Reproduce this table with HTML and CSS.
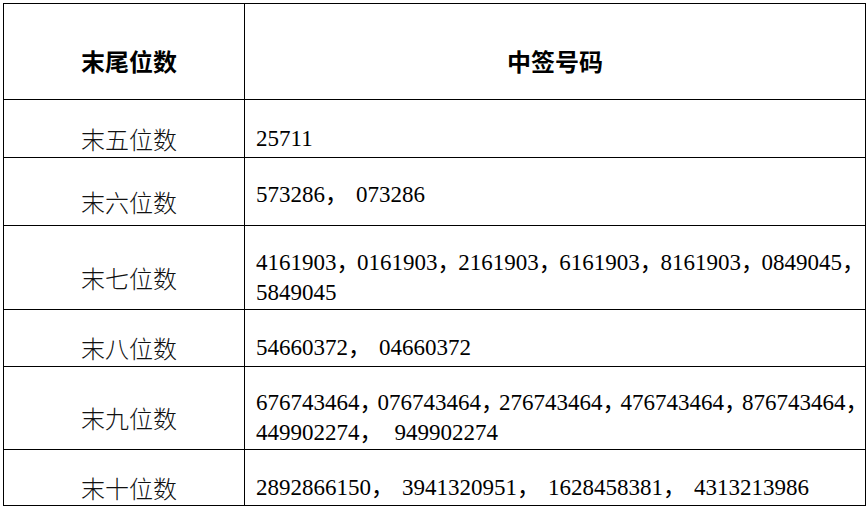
FILE: index.html
```html
<!DOCTYPE html>
<html lang="zh-CN">
<head>
<meta charset="utf-8">
<title>中签号码</title>
<link rel="stylesheet" href="styles.css">
</head>
<body>
<table class="lottery">
  <thead>
    <tr class="row-head">
      <th class="col-tail">末尾位数</th>
      <th class="col-nums">中签号码</th>
    </tr>
  </thead>
  <tbody>
    <tr class="row-5">
      <td class="label">末五位数</td>
      <td class="nums">25711</td>
    </tr>
    <tr class="row-6">
      <td class="label">末六位数</td>
      <td class="nums nums-top">573286<span class="sep">，</span>073286</td>
    </tr>
    <tr class="row-7">
      <td class="label">末七位数</td>
      <td class="nums">4161903<span class="sep sep-j7">，</span>0161903<span class="sep sep-j7">，</span>2161903<span class="sep sep-j7">，</span>6161903<span class="sep sep-j7">，</span>8161903<span class="sep sep-j7">，</span>0849045<span class="sep sep-end">，</span><br>5849045</td>
    </tr>
    <tr class="row-8">
      <td class="label">末八位数</td>
      <td class="nums">54660372<span class="sep">，</span>04660372</td>
    </tr>
    <tr class="row-9">
      <td class="label">末九位数</td>
      <td class="nums">676743464<span class="sep sep-j9">，</span>076743464<span class="sep sep-j9">，</span>276743464<span class="sep sep-j9">，</span>476743464<span class="sep sep-j9">，</span>876743464<span class="sep sep-end">，</span><br>449902274<span class="sep sep-wide">，</span>949902274</td>
    </tr>
    <tr class="row-10">
      <td class="label">末十位数</td>
      <td class="nums">2892866150<span class="sep">，</span>3941320951<span class="sep">，</span>1628458381<span class="sep">，</span>4313213986</td>
    </tr>
  </tbody>
</table>
</body>
</html>
```
FILE: styles.css
```css
html, body {
  background: #ffffff;
}
body {
  margin: 3px 0 0 3px;
  color: #000000;
}
.lottery {
  border-collapse: collapse;
  width: 863px;
  table-layout: fixed;
}
.lottery th,
.lottery td {
  border: 1px solid #000000;
  padding: 20px 0 0 0;
  vertical-align: middle;
  white-space: nowrap;
}
.lottery .col-tail {
  width: 230px;
  padding-left: 10px;
}
.lottery .row-head th {
  padding-top: 18px;
  font-family: "Noto Sans CJK SC", sans-serif;
  font-weight: 700;
  font-size: 24px;
  line-height: 30px;
  text-align: center;
}
.lottery .row-head .col-tail {
  padding-left: 10px;
}
.row-head { height: 96px; }
.row-5 { height: 58px; }
.row-6 { height: 68px; }
.row-7 { height: 84px; }
.row-8 { height: 57px; }
.row-9 { height: 83px; }
.row-10 { height: 56px; }

.lottery .label {
  font-family: "Noto Sans CJK SC", sans-serif;
  font-weight: 300;
  font-size: 24px;
  line-height: 30px;
  text-align: center;
  padding-left: 10px;
  color: #111111;
}
.lottery .nums {
  font-family: "Liberation Serif", "Noto Sans CJK SC", serif;
  font-size: 23px;
  line-height: 30px;
  text-align: left;
  padding-left: 11px;
}
.lottery .nums-top {
  padding-top: 6px;
}
.sep {
  font-family: "Noto Sans CJK SC", sans-serif;
  line-height: 0;
  letter-spacing: 8px;
}
.sep-j7 { letter-spacing: -2.4px; }
.sep-j9 { letter-spacing: -5px; }
.sep-end { letter-spacing: -10px; }
.sep-wide { letter-spacing: 12px; }
```
